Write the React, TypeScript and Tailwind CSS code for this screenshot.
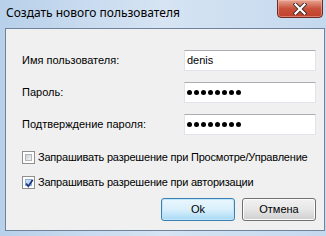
import React from 'react'

const ui = { fontFamily: '"Liberation Sans", Arial, sans-serif' }
const title = { fontFamily: '"Noto Sans", "Open Sans", sans-serif' }

function Dots() {
  return (
    <div className="flex items-center gap-[2px] pl-[2px]">
      {Array.from({ length: 8 }).map((_, i) => (
        <span key={i} className="w-[5px] h-[5px] rounded-full bg-black" />
      ))}
    </div>
  )
}

function Field({ label, children }: { label: string; children: React.ReactNode }) {
  return (
    <div className="flex items-center justify-between h-[21px]">
      <span className="text-[11px] text-black whitespace-nowrap">{label}</span>
      <div className="w-[132px] h-[21px] bg-white border border-[#e2e3ea] border-t-[#abadb3] flex items-center">
        {children}
      </div>
    </div>
  )
}

function Check({ checked, label }: { checked?: boolean; label: string }) {
  return (
    <div className="flex items-center gap-[3px] h-[16px]">
      <div className="w-[13px] h-[13px] shrink-0 border border-[#8e8f8f] bg-white p-[2px]">
        <div
          className={
            checked
              ? 'w-full h-full bg-gradient-to-br from-[#cfe4f8] to-[#a9cbee] border border-[#8cb0d8] relative'
              : 'w-full h-full bg-gradient-to-br from-[#cbcfd5] to-[#f4f4f4] border border-[#b2b5b9]'
          }
        >
          {checked && (
            <svg viewBox="0 0 9 9" className="absolute -left-[1px] -top-[1px] w-[9px] h-[9px]">
              <path d="M1.2 4.6 L3.3 7.3 L7.8 0.8" fill="none" stroke="#21367d" strokeWidth="1.7" />
            </svg>
          )}
        </div>
      </div>
      <span className="text-[11px] text-black whitespace-nowrap tracking-[-0.2px]">{label}</span>
    </div>
  )
}

export default function App() {
  return (
    <div
      className="w-[326px] h-[236px] overflow-hidden flex flex-col bg-gradient-to-r from-[#b8d0ea] via-[#d6e4f3] to-[#c4d8ee]"
      style={ui}
    >
      <div className="h-[28px] flex justify-between pl-[6px] pr-[3px]">
        <span className="text-[12px] text-black pt-[6px] leading-[14px] whitespace-nowrap" style={title}>
          Создать нового пользователя
        </span>
        <div className="w-[46px] h-[19px] -mt-[1px] rounded-b-[4px] border border-[#6b2a22] bg-gradient-to-b from-[#e6a593] via-[#c9523d] to-[#c13e2a] flex items-center justify-center shadow-[inset_0_0_0_1px_rgba(255,200,190,0.45)]">
          <svg viewBox="0 0 14 12" className="w-[14px] h-[12px]">
            <path d="M2.5 1.5 L11.5 10.5 M11.5 1.5 L2.5 10.5" stroke="#3f2a2a" strokeWidth="4" strokeLinecap="square" />
            <path d="M2.5 1.5 L11.5 10.5 M11.5 1.5 L2.5 10.5" stroke="#ffffff" strokeWidth="2.2" strokeLinecap="square" />
          </svg>
        </div>
      </div>
      <div className="ml-[5px] w-[320px] h-[203px] border border-[#70839c] bg-[#f0f0f0] flex flex-col pt-[21px] pl-[16px] pr-[8px]">
        <div className="flex flex-col gap-[11px]">
          <Field label="Имя пользователя:">
            <span className="text-[11px] text-black pl-[2px]">denis</span>
          </Field>
          <Field label="Пароль:">
            <Dots />
          </Field>
          <Field label="Подтверждение пароля:">
            <Dots />
          </Field>
        </div>
        <div className="flex flex-col gap-[9px] mt-[14px]">
          <Check label="Запрашивать разрешение при Просмотре/Управление" />
          <Check checked label="Запрашивать разрешение при авторизации" />
        </div>
        <div className="flex justify-end gap-[7px] mt-[8px]">
          <button className="w-[74px] h-[23px] rounded-[3px] border border-[#3c7fb1] bg-gradient-to-b from-[#eaf6fd] via-[#d9f0fc] to-[#a7d9f5] text-[11px] text-black shadow-[inset_0_0_0_1px_#bfe6f9]">
            Ok
          </button>
          <button className="w-[74px] h-[23px] rounded-[3px] border border-[#707070] bg-gradient-to-b from-[#f2f2f2] via-[#e6e6e6] to-[#cfcfcf] text-[11px] text-black shadow-[inset_0_0_0_1px_#fcfcfc]">
            Отмена
          </button>
        </div>
      </div>
    </div>
  )
}
